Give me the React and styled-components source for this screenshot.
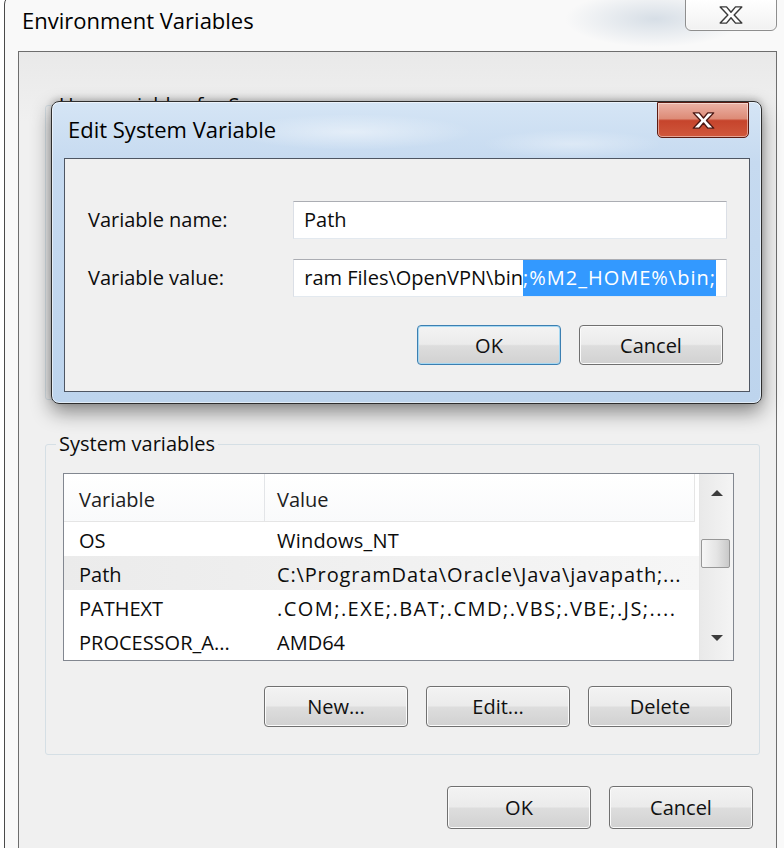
import React from 'react'
import styled, { createGlobalStyle } from 'styled-components'

const GlobalStyle = createGlobalStyle`
  html, body {
    margin: 0;
    padding: 0;
    background: #fff;
  }
  body {
    font-family: "Open Sans", "Noto Sans", sans-serif;
    color: #0c0c0c;
  }
`

const Screen = styled.div`
  position: relative;
  width: 784px;
  height: 848px;
  overflow: hidden;
  background: #fff;
`

const Window = styled.div`
  box-sizing: border-box;
  margin: -4px 0 0 4px;
  width: 788px;
  height: 880px;
  border: 1px solid #4a4a4a;
  border-radius: 8px 8px 0 0;
  background:
    radial-gradient(ellipse 90px 28px at 650px 22px, rgba(150, 172, 195, 0.35), transparent),
    #f9f9f9;
  display: flex;
  flex-direction: column;
`

const TitleBar = styled.div`
  height: 54px;
  flex-shrink: 0;
  display: flex;
  justify-content: space-between;
  align-items: flex-start;
  padding: 0 14px 0 17px;
`

const Title = styled.div`
  font-size: 22px;
  line-height: 30px;
  padding-top: ${p => p.$top}px;
  color: #000;
`

const CloseButton = styled.div`
  box-sizing: border-box;
  width: 92px;
  height: ${p => (p.$red ? 36 : 32)}px;
  margin-top: ${p => (p.$red ? 0 : 2)}px;
  display: flex;
  align-items: center;
  justify-content: center;
  border: 1px solid ${p => (p.$red ? '#5c1b12' : '#8e8e8e')};
  border-radius: ${p => (p.$red ? '0 0 5px 5px' : '0 0 6px 6px')};
  background: ${p =>
    p.$red
      ? 'linear-gradient(#ecb3a6 0%, #dd8b77 46%, #c6442c 52%, #d0583c 100%)'
      : 'linear-gradient(#ffffff, #f1f1f1)'};
  box-shadow: inset 0 0 0 1px rgba(255, 255, 255, 0.45);
`

const Panel = styled.div`
  flex: 1;
  margin: 0 14px 0 13px;
  border: 1px solid #6e6e6e;
  background: linear-gradient(#e9e9e9, #f0f0f0 70px);
  display: flex;
  flex-direction: column;
`

const GroupBox = styled.fieldset`
  box-sizing: border-box;
  margin: ${p => p.$top}px 16px 0 26px;
  padding: 0 25px 27px 17px;
  border: 1px solid #d5dfe5;
  border-radius: 3px;
  min-width: 0;
  height: ${p => (p.$height ? `${p.$height}px` : 'auto')};
`

const Legend = styled.legend`
  margin-left: -7px;
  padding: 0 3px;
  font-size: 20px;
  line-height: 28px;
`

const ListView = styled.div`
  box-sizing: border-box;
  margin-top: 15px;
  height: 188px;
  border: 1px solid #828790;
  background: #fff;
  display: flex;
`

const ListBody = styled.div`
  flex: 1;
  display: flex;
  flex-direction: column;
`

const HeaderRow = styled.div`
  display: grid;
  grid-template-columns: 200px 1fr;
  height: 47px;
  margin-right: 4px;
  border-bottom: 1px solid #e5e5e5;
  border-right: 1px solid #e5e5e5;
  background: linear-gradient(#ffffff, #f9fafb);
`

const HeaderCell = styled.div`
  display: flex;
  align-items: center;
  padding: 4px 0 0 ${p => (p.$first ? 15 : 12)}px;
  border-left: ${p => (p.$first ? 'none' : '1px solid #e3e5e8')};
  font-size: 20px;
  color: #1e1e1e;
`

const Row = styled.div`
  display: grid;
  grid-template-columns: 200px 1fr;
  height: 34px;
  background: ${p => (p.$hot ? 'linear-gradient(to right, #ebebeb, #f6f6f6)' : 'transparent')};
`

const Cell = styled.div`
  padding: 4px 0 0 ${p => (p.$first ? 15 : 13)}px;
  font-size: 20px;
  line-height: 30px;
  letter-spacing: ${p => p.$spacing || 0}px;
  white-space: nowrap;
  overflow: hidden;
`

const ScrollBar = styled.div`
  width: 33px;
  display: flex;
  flex-direction: column;
  border-left: 1px solid #e6e6e6;
  background: linear-gradient(to right, #e9e9e9, #f4f4f4);
`

const ArrowButton = styled.div`
  height: ${p => (p.$down ? 44 : 38)}px;
  display: flex;
  align-items: center;
  justify-content: center;
  &::after {
    content: '';
    width: 0;
    height: 0;
    border-left: 6px solid transparent;
    border-right: 6px solid transparent;
    ${p => (p.$down ? 'border-top' : 'border-bottom')}: 6px solid #3c3c3c;
  }
`

const Track = styled.div`
  flex: 1;
`

const Thumb = styled.div`
  box-sizing: border-box;
  width: 29px;
  height: 29px;
  margin-left: 1px;
  border: 1px solid #979797;
  border-radius: 2px;
  background: linear-gradient(to right, #f6f6f6, #e4e4e4 55%, #c9c9c9);
`

const ButtonRow = styled.div`
  display: flex;
  justify-content: flex-end;
  gap: 18px;
  margin: ${p => p.$top}px ${p => p.$right}px 0 0;
`

const Button = styled.div`
  box-sizing: border-box;
  width: 144px;
  height: ${p => p.$h || 41}px;
  display: flex;
  align-items: center;
  justify-content: center;
  font-size: 20px;
  color: #111;
  border: 1px solid ${p => (p.$focus ? '#3c7fb1' : '#707070')};
  border-radius: 4px;
  background: linear-gradient(#f3f3f3 0%, #ebebeb 48%, #dddddd 52%, #d1d1d1 100%);
  box-shadow: inset 0 0 0 1px ${p => (p.$focus ? '#a6d8f2' : '#fbfbfb')};
`

const Dialog = styled.div`
  position: absolute;
  left: 51px;
  top: 101px;
  width: 711px;
  height: 303px;
  box-sizing: border-box;
  padding: 0 11px 11px 12px;
  border: 1px solid #2e2e2e;
  border-radius: 8px;
  background:
    radial-gradient(ellipse 120px 18px at 300px 30px, rgba(255, 255, 255, 0.45), transparent),
    radial-gradient(ellipse 90px 14px at 520px 42px, rgba(255, 255, 255, 0.35), transparent),
    linear-gradient(#d5e5f5, #c6daf0 60px, #bdd4ed);
  box-shadow: 0 8px 20px rgba(0, 0, 0, 0.45), 0 -2px 6px rgba(0, 0, 0, 0.2),
    inset 0 0 0 1px rgba(255, 255, 255, 0.55);
  display: flex;
  flex-direction: column;
`

const DialogHead = styled.div`
  height: 56px;
  flex-shrink: 0;
  display: flex;
  justify-content: space-between;
  align-items: flex-start;
  padding: 0 1px 0 4px;
`

const Client = styled.div`
  flex: 1;
  border: 1px solid #4e5663;
  background: #f0f0f0;
  padding: 42px 22px 0 23px;
`

const Form = styled.div`
  display: grid;
  grid-template-columns: 205px 1fr;
  row-gap: 20px;
  align-items: center;
`

const Label = styled.div`
  font-size: 20px;
  line-height: 28px;
`

const TextBox = styled.div`
  box-sizing: border-box;
  height: 38px;
  display: flex;
  align-items: center;
  justify-content: ${p => (p.$end ? 'flex-end' : 'flex-start')};
  overflow: hidden;
  padding: 0 10px;
  background: #fff;
  border: 1px solid #dbdfe6;
  border-top-color: #abadb3;
  border-bottom-color: #e3e9ef;
  font-size: 20px;
  line-height: 36px;
  white-space: pre;
`

const Plain = styled.span`
  flex-shrink: 0;
`

const Selected = styled.span`
  flex-shrink: 0;
  letter-spacing: 1px;
  background: #3399ff;
  color: #fff;
`

const XGlyph = ({ w, h, stroke }) => (
  <svg width={w} height={h} viewBox="0 0 26 20">
    <polygon
      points="1,1 8,1 13,7 18,1 25,1 16.5,10 25,19 18,19 13,13 8,19 1,19 9.5,10"
      fill="#fff"
      stroke={stroke}
      strokeWidth="1.6"
      strokeLinejoin="round"
    />
  </svg>
)

const rows = [
  { name: 'OS', value: 'Windows_NT', spacing: 0.2 },
  { name: 'Path', value: 'C:\\ProgramData\\Oracle\\Java\\javapath;...', spacing: 0.85 },
  { name: 'PATHEXT', value: '.COM;.EXE;.BAT;.CMD;.VBS;.VBE;.JS;....', spacing: 1.45 },
  { name: 'PROCESSOR_A...', value: 'AMD64', spacing: 0 },
]

export default function App() {
  return (
    <Screen>
      <GlobalStyle />
      <Window>
        <TitleBar>
          <Title $top={8}>Environment Variables</Title>
          <CloseButton>
            <XGlyph w={26} h={18} stroke="#3a3a3a" />
          </CloseButton>
        </TitleBar>
        <Panel>
          <GroupBox $top={39} $height={309}>
            <Legend>User variables for S</Legend>
          </GroupBox>
          <GroupBox $top={30}>
            <Legend>System variables</Legend>
            <ListView>
              <ListBody>
                <HeaderRow>
                  <HeaderCell $first>Variable</HeaderCell>
                  <HeaderCell>Value</HeaderCell>
                </HeaderRow>
                {rows.map(row => (
                  <Row key={row.name} $hot={row.name === 'Path'}>
                    <Cell $first>{row.name}</Cell>
                    <Cell $spacing={row.spacing}>{row.value}</Cell>
                  </Row>
                ))}
              </ListBody>
              <ScrollBar>
                <ArrowButton />
                <Track>
                  <Thumb style={{ marginTop: 27 }} />
                </Track>
                <ArrowButton $down />
              </ScrollBar>
            </ListView>
            <ButtonRow $top={25} $right={2}>
              <Button>New...</Button>
              <Button>Edit...</Button>
              <Button>Delete</Button>
            </ButtonRow>
          </GroupBox>
          <ButtonRow $top={31} $right={23}>
            <Button $h={43}>OK</Button>
            <Button $h={43}>Cancel</Button>
          </ButtonRow>
        </Panel>
      </Window>

      <Dialog>
        <DialogHead>
          <Title $top={12}>Edit System Variable</Title>
          <CloseButton $red>
            <XGlyph w={23} h={17} stroke="#4a1510" />
          </CloseButton>
        </DialogHead>
        <Client>
          <Form>
            <Label>Variable name:</Label>
            <TextBox>Path</TextBox>
            <Label>Variable value:</Label>
            <TextBox $end>
              <Plain>ram Files\OpenVPN\bin</Plain>
              <Selected>;%M2_HOME%\bin;</Selected>
            </TextBox>
          </Form>
          <ButtonRow $top={28} $right={4}>
            <Button $h={40} $focus>OK</Button>
            <Button $h={40}>Cancel</Button>
          </ButtonRow>
        </Client>
      </Dialog>
    </Screen>
  )
}
